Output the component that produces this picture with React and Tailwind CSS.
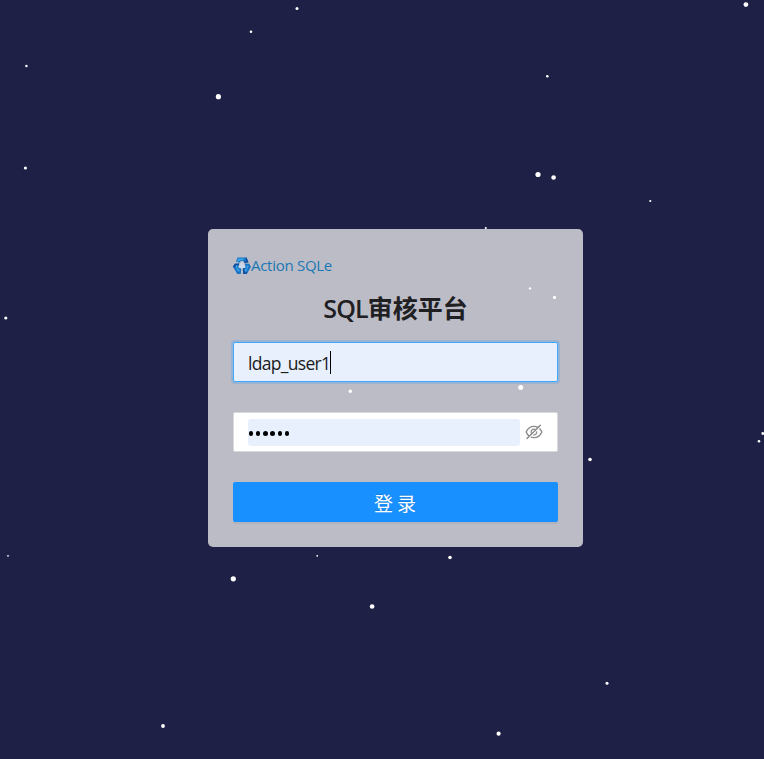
import { AiOutlineEyeInvisible } from "react-icons/ai";

// Star field: centre x, centre y, radius
const STARS = [
  [297, 8.5, 1.5], [251, 31.7, 1.3], [26.4, 66, 1.2], [218.4, 96.7, 2.6],
  [25.4, 168, 1.6], [745.9, 4.6, 2.4], [547.3, 76.3, 1.3], [538, 174.5, 2.6],
  [553.6, 177.5, 2.3], [650.3, 201, 1.1], [485.8, 228, 1.1], [530, 288.4, 1.2],
  [554.5, 297.4, 1.6], [350.3, 391.3, 1.7], [520.7, 387.6, 2.5], [8, 555.8, 0.9],
  [317.2, 555.8, 0.9], [233.3, 578.8, 2.6], [372.1, 606.5, 2.3], [163, 726, 1.9],
  [590, 459.5, 1.8], [759, 441.2, 1.3], [762.8, 433.5, 1.4], [450, 557.5, 1.8],
  [607, 683.2, 1.5], [498.6, 733.7, 2.1], [5.8, 318, 1.6],
];

function Stars() {
  return (
    <svg className="absolute inset-0 h-full w-full" viewBox="0 0 764 759" fill="#fff">
      {STARS.map(([x, y, r]) => (
        <circle key={`${x}-${y}`} cx={x} cy={y} r={r} />
      ))}
    </svg>
  );
}

function Logo() {
  return (
    <svg className="h-[18px] w-[18px] shrink-0" viewBox="0 0 18 18">
      <path d="M9 4.500L13.500 11 9 12.500 4.500 11z" fill="#c9d9ea" />
      <path d="M4.500.5h9l2 4.700-3.700.8-1.600-2H7.800L6.400 5.800 3 4.500z" fill="#1b73c4" />
      <path d="M1.800 6.800l4.400-.3-.9 4 2.900 1-.4 5.500H4.200L0 9.800z" fill="#1b73c4" />
      <path d="M16.200 6.800l-4.400-.3.900 4-2.900 1 .4 5.500h3.600L18 9.800z" fill="#1b73c4" />
      <path d="M5 1.500h6.500L10 3.200H7L5.500 4.800 4 4.200z" fill="#3ba6e8" />
      <path d="M2.300 9.300L4.500 8l-.4 3.200 2.300 1.200v2.200H5z" fill="#3ba6e8" />
      <path d="M15.700 9.300L13.500 8l.4 3.200-2.300 1.200v2.200H13z" fill="#3ba6e8" />
      <path d="M12.500.5h1l2 4.700-3.700.8L11 5l2.300-1z" fill="#114d9c" />
      <path d="M0 9.800l1.800-3 4.400-.3-.4 1.700-2.600-.1L1.300 11z" fill="#114d9c" />
      <path d="M10.200 17l-.4-5.500 1.500-.5.300 4.500 2.700-.3-.5 1.800z" fill="#114d9c" />
    </svg>
  );
}

export default function App() {
  return (
    <main className="relative h-[759px] w-[764px] overflow-hidden bg-[#1f2045] pt-[229px] pl-[208px] font-['Open_Sans','Noto_Sans_CJK_SC',sans-serif]">
      <Stars />
      <section className="relative flex h-[318px] w-[375px] flex-col rounded-[5px] bg-white/70 p-[25px]">
        <div className="flex h-6 items-center text-[#1a78b3]">
          <Logo />
          <span className="pb-[2px] text-[15px] leading-6 tracking-[-0.28px]">Action SQLe</span>
        </div>
        <h1 className="mt-2 flex h-[46px] items-center justify-center text-[25px] font-bold whitespace-nowrap text-[#202022]">
          <span className="text-[25px] font-semibold tracking-[-0.9px]">SQL</span>
          <span>审核平台</span>
        </h1>
        <div className="mt-[10px] flex h-10 shrink-0 items-center rounded-[2px] border border-[#40a9ff] bg-[#e8f0fe] pl-[14px] shadow-[0_0_0_2px_rgba(24,144,255,0.2)]">
          <span className="pt-[2px] text-[17.5px] tracking-[-0.7px] text-[#1a1a1a]">ldap_user1</span>
          <span className="h-[23px] w-px bg-black" />
        </div>
        <div className="mt-[30px] flex h-10 shrink-0 items-center rounded-[2px] border border-[#d9d9d9] bg-white pl-[14px]">
          <div className="flex h-[27px] w-[272px] items-center gap-[2.7px] rounded-[3px] bg-[#e8f0fe] pl-[0.8px]">
            {[0, 1, 2, 3, 4, 5].map((i) => (
              <span key={i} className="mt-[3px] h-[4.5px] w-[4.5px] rounded-full bg-black" />
            ))}
          </div>
          <AiOutlineEyeInvisible className="ml-[4px] h-[20px] w-[20px] text-[#8c8c8c]" />
        </div>
        <button className="mt-[30px] h-10 shrink-0 rounded-[2px] bg-[#1890ff] pt-[4px] text-center text-[19px] text-white shadow-[0_2px_0_rgba(0,0,0,0.045)] [text-shadow:0_-1px_0_rgba(0,0,0,0.12)]">
          <span className="mr-[-3px] tracking-[4px]">登录</span>
        </button>
      </section>
    </main>
  );
}
